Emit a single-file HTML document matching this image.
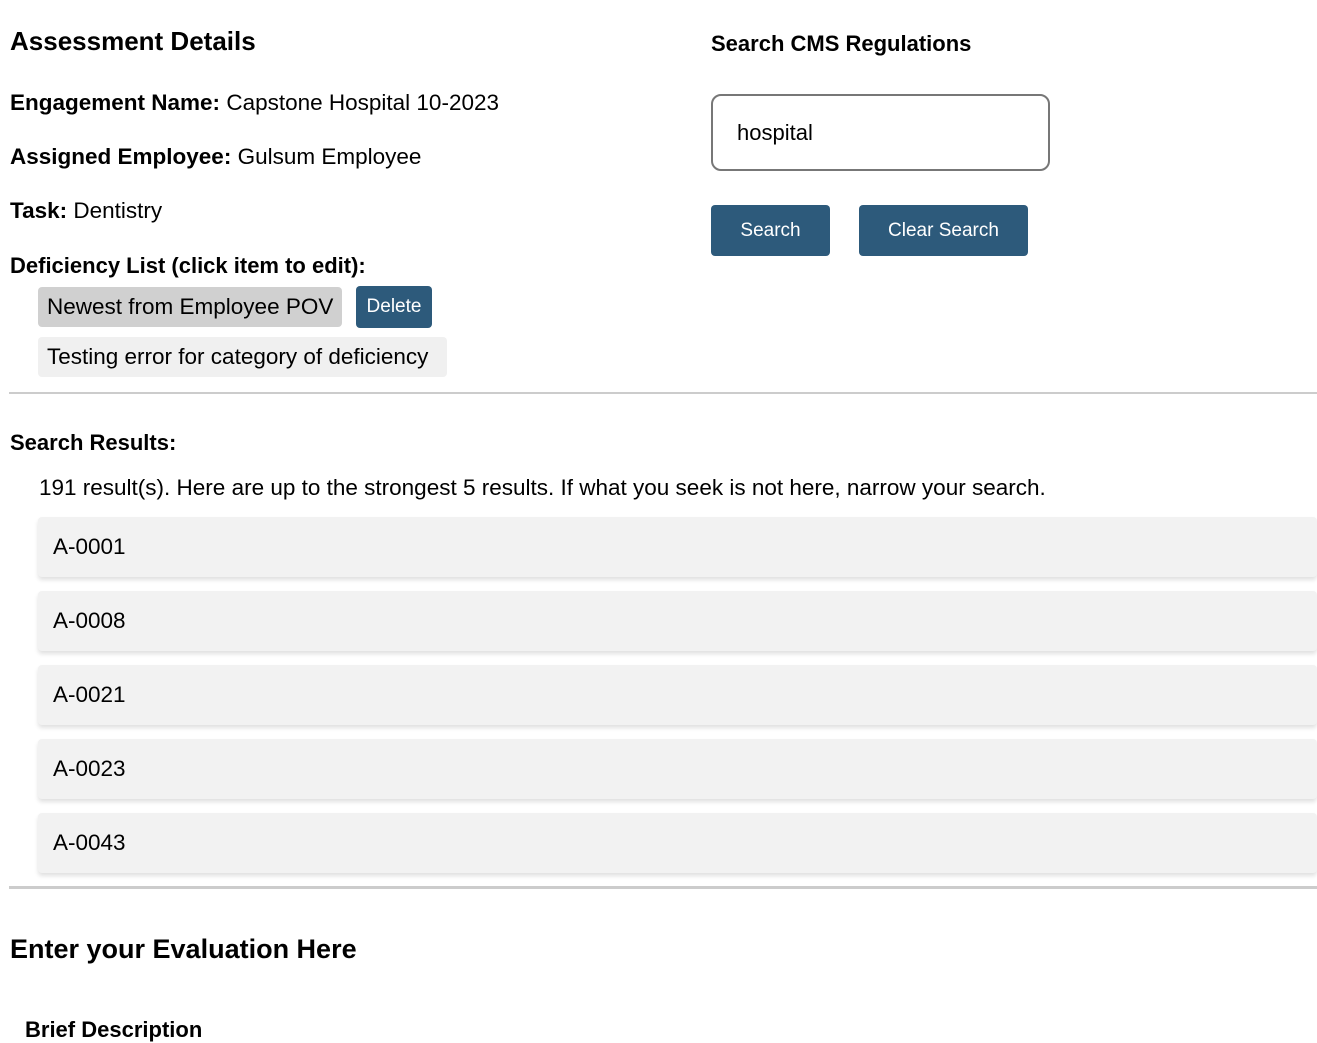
<!DOCTYPE html>
<html><head><style>
body{margin:0;width:1317px;height:1023px;overflow:hidden;background:#fff;font-family:"Liberation Sans",sans-serif;color:#000;position:relative}
.a{position:absolute;white-space:nowrap}
.h{font-weight:bold}
.btn{position:absolute;background:#2d5a7b;color:#fff;border-radius:4px;font-size:19px;text-align:center}
.res{position:absolute;left:38px;width:1279px;height:60px;background:#f2f2f2;border-radius:4px;box-shadow:0 3px 4px rgba(0,0,0,.12);font-size:22.5px;line-height:60px;box-sizing:border-box;padding-left:15px}
.hr{position:absolute;left:9px;width:1308px;background:#ccc}
</style></head><body>
<div class="a h" style="left:10px;top:26px;font-size:26px">Assessment Details</div>
<div class="a" style="left:10px;top:90px;font-size:22.5px"><b>Engagement Name:</b> Capstone Hospital 10-2023</div>
<div class="a" style="left:10px;top:144px;font-size:22.5px"><b>Assigned Employee:</b> Gulsum Employee</div>
<div class="a" style="left:10px;top:198px;font-size:22.5px"><b>Task:</b> Dentistry</div>
<div class="a h" style="left:10px;top:253px;font-size:22px">Deficiency List (click item to edit):</div>
<div class="a" style="left:38px;top:287px;width:304px;height:40px;background:#d0d0d0;border-radius:4px;font-size:22.5px;line-height:40px;padding-left:9px;box-sizing:border-box">Newest from Employee POV</div>
<div class="btn" style="left:356px;top:286px;width:76px;height:42px;line-height:42px">Delete</div>
<div class="a" style="left:38px;top:337px;width:409px;height:40px;background:#f0f0f0;border-radius:4px;font-size:22.5px;line-height:40px;padding-left:9px;box-sizing:border-box">Testing error for category of deficiency</div>
<div class="hr" style="top:392px;height:2px"></div>

<div class="a h" style="left:711px;top:31px;font-size:22px">Search CMS Regulations</div>
<div class="a" style="left:711px;top:94px;width:339px;height:77px;border:2px solid #777;border-radius:10px;box-sizing:border-box;font-size:22px;line-height:73px;padding-left:24px">hospital</div>
<div class="btn" style="left:711px;top:205px;width:119px;height:51px;line-height:51px">Search</div>
<div class="btn" style="left:859px;top:205px;width:169px;height:51px;line-height:51px">Clear Search</div>

<div class="a h" style="left:10px;top:430px;font-size:22px">Search Results:</div>
<div class="a" style="left:39px;top:475px;font-size:22.5px">191 result(s). Here are up to the strongest 5 results. If what you seek is not here, narrow your search.</div>
<div class="res" style="top:517px">A-0001</div>
<div class="res" style="top:591px">A-0008</div>
<div class="res" style="top:665px">A-0021</div>
<div class="res" style="top:739px">A-0023</div>
<div class="res" style="top:813px">A-0043</div>
<div class="hr" style="top:886px;height:3px"></div>
<div class="a h" style="left:10px;top:934px;font-size:27px">Enter your Evaluation Here</div>
<div class="a h" style="left:25px;top:1017px;font-size:22px">Brief Description</div>
</body></html>
